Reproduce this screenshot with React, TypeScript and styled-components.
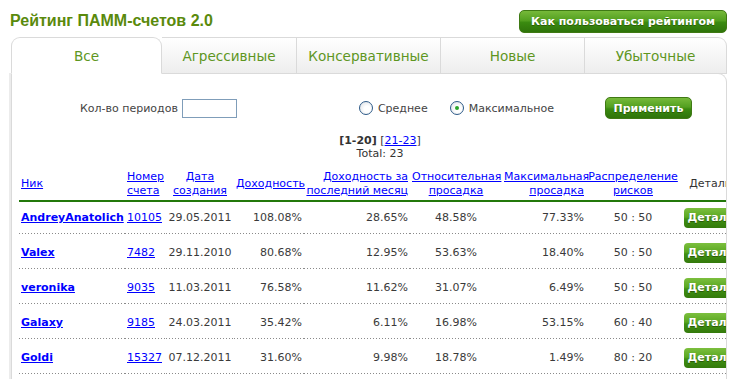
import React from "react";
import styled, { createGlobalStyle } from "styled-components";

const GlobalStyle = createGlobalStyle`
    body {
        margin: 0;
        background: #ffffff;
        font-family: "DejaVu Sans", Verdana, sans-serif;
        font-size: 11px;
        color: #333333;
    }
`;

const Page = styled.div`
    width: 734px;
    height: 379px;
    overflow: hidden;
`;

const TopBar = styled.div`
    display: flex;
    justify-content: space-between;
    align-items: center;
    height: 22px;
    padding: 10px 7px 0 10px;
`;

const Title = styled.h1`
    margin: 0;
    font-family: "Liberation Sans", Arial, sans-serif;
    font-size: 16px;
    font-weight: bold;
    color: #5a8a0c;
`;

interface GreenButtonProps {
    width: string;
    height: string;
}
const GreenButton = styled.button<GreenButtonProps>`
    width: ${(props) => props.width};
    height: ${(props) => props.height};
    padding: 0;
    border: 1px solid #3f7a14;
    border-radius: 5px;
    background: linear-gradient(#76b93a 0%, #53a020 45%, #3a8a10 55%, #2f740a 100%);
    color: #ffffff;
    font-family: "DejaVu Sans", Verdana, sans-serif;
    font-size: 11px;
    font-weight: bold;
    text-shadow: 0 1px 0 #2b5c06;
    white-space: nowrap;
    overflow: hidden;
    cursor: pointer;
`;

const Tabs = styled.div`
    display: flex;
    position: relative;
    z-index: 1;
    margin: 5px 0 -1px 11px;
    width: 716px;
`;

interface TabProps {
    active?: boolean;
    width: string;
    last?: boolean;
}
const Tab = styled.div<TabProps>`
    box-sizing: border-box;
    width: ${(props) => props.width};
    height: 37px;
    display: flex;
    justify-content: center;
    align-items: center;
    font-size: 13.6px;
    color: #5e961f;
    cursor: pointer;
    border-top: 1px solid #dadada;
    border-right: 1px solid #dadada;
    border-left: ${(props) => (props.active ? "1px solid #dadada" : "none")};
    border-bottom: 1px solid ${(props) => (props.active ? "#ffffff" : "#dadada")};
    border-radius: ${(props) =>
        props.active ? "9px 9px 0 0" : props.last ? "0 9px 0 0" : "0"};
    background: ${(props) =>
        props.active ? "#ffffff" : "linear-gradient(#ffffff, #ededed)"};
`;

const Panel = styled.div`
    margin-left: 11px;
    width: 716px;
    height: 306px;
    box-sizing: border-box;
    border: 1px solid #dadada;
    border-bottom: none;
    border-top-right-radius: 9px;
    box-shadow: -2px 0 0 #ececec;
    padding-left: 7px;
    overflow: hidden;
`;

const Content = styled.div`
    width: 722px;
`;

const FormRow = styled.div`
    display: flex;
    align-items: center;
    height: 22px;
    margin-top: 23px;
    padding-left: 61px;
    color: #444444;
`;

const Label = styled.span`
    margin-right: 4px;
`;

const PeriodInput = styled.input`
    box-sizing: border-box;
    width: 55px;
    height: 19px;
    border: 1px solid #7f9db9;
    padding: 0 2px;
    font-size: 11px;
`;

interface RadioItemProps {
    offset: string;
}
const RadioItem = styled.label<RadioItemProps>`
    display: flex;
    align-items: center;
    gap: 5px;
    margin-left: ${(props) => props.offset};
    cursor: pointer;
`;

interface RadioCircleProps {
    checked?: boolean;
}
const RadioCircle = styled.span<RadioCircleProps>`
    position: relative;
    width: 12px;
    height: 12px;
    border: 1px solid #2d5a88;
    border-radius: 50%;
    background: radial-gradient(circle at 60% 60%, #ffffff 30%, #d8dde2 100%);
    &::after {
        content: "";
        display: ${(props) => (props.checked ? "block" : "none")};
        position: absolute;
        left: 4px;
        top: 4px;
        width: 4px;
        height: 4px;
        border-radius: 50%;
        background: #2aa52a;
    }
`;

const ApplyWrap = styled.div`
    margin-left: 51px;
    display: flex;
`;

const Pager = styled.div`
    margin-top: 15px;
    text-align: center;
    line-height: 13px;
    color: #333333;
`;

const Current = styled.b`
    color: #333333;
`;

const Link = styled.a`
    color: #0000ff;
    text-decoration: underline;
    cursor: pointer;
`;

const NickLink = styled(Link)`
    font-weight: bold;
`;

const Table = styled.table`
    margin-top: 8px;
    width: 722px;
    table-layout: fixed;
    border-collapse: collapse;
`;

type Align = "left" | "center" | "right";

interface CellProps {
    align: Align;
}
const Th = styled.th<CellProps>`
    padding: 2px;
    height: 28px;
    line-height: 14px;
    font-weight: normal;
    text-align: ${(props) => props.align};
    vertical-align: middle;
    white-space: nowrap;
    border-bottom: 2px solid #23780a;
    color: #333333;
`;

const Row = styled.tr`
    & + & > td {
        padding-top: 5px;
    }
`;

const Td = styled.td<CellProps>`
    padding: 2px 2px 3px;
    height: 27px;
    text-align: ${(props) => props.align};
    vertical-align: middle;
    white-space: nowrap;
    background-image: linear-gradient(to right, #8a8a8a 1px, transparent 1px);
    background-size: 3px 1px;
    background-repeat: repeat-x;
    background-position: left bottom;
    color: #3a3a3a;
`;

const DetailsButton = styled.button`
    width: 54px;
    height: 20px;
    padding: 0 0 0 4px;
    text-align: left;
    border: none;
    border-radius: 4px;
    background: linear-gradient(#7cbf3e 0%, #5aa822 45%, #3f8f12 55%, #347a0c 100%);
    color: #ffffff;
    font-family: "DejaVu Sans", Verdana, sans-serif;
    font-size: 11px;
    font-weight: bold;
    text-shadow: 0 1px 0 #2b5c06;
    cursor: pointer;
`;

const columns: { title: React.ReactNode; width: number; align: Align; link: boolean }[] = [
    { title: "Ник", width: 106, align: "left", link: true },
    { title: <>Номер<br />счета</>, width: 41, align: "left", link: true },
    { title: <>Дата<br />создания</>, width: 68, align: "center", link: true },
    { title: "Доходность", width: 70, align: "right", link: true },
    { title: <>Доходность за<br />последний месяц</>, width: 106, align: "right", link: true },
    { title: <>Относительная<br />просадка</>, width: 92, align: "center", link: true },
    { title: <>Максимальная<br />просадка</>, width: 84, align: "right", link: true },
    { title: <>Распределение<br />рисков</>, width: 94, align: "center", link: true },
    { title: "Детали", width: 61, align: "center", link: false },
];

const rows = [
    ["AndreyAnatolich", "10105", "29.05.2011", "108.08%", "28.65%", "48.58%", "77.33%", "50 : 50"],
    ["Valex", "7482", "29.11.2010", "80.68%", "12.95%", "53.63%", "18.40%", "50 : 50"],
    ["veronika", "9035", "11.03.2011", "76.58%", "11.62%", "31.07%", "6.49%", "50 : 50"],
    ["Galaxy", "9185", "24.03.2011", "35.42%", "6.11%", "16.98%", "53.15%", "60 : 40"],
    ["Goldi", "15327", "07.12.2011", "31.60%", "9.98%", "18.78%", "1.49%", "80 : 20"],
];

const tabs = [
    { name: "Все", width: "151px" },
    { name: "Агрессивные", width: "135px" },
    { name: "Консервативные", width: "144px" },
    { name: "Новые", width: "144px" },
    { name: "Убыточные", width: "142px" },
];

export default function App() {
    const [activeTab, setActiveTab] = React.useState(0);
    const [mode, setMode] = React.useState("max");

    return (
        <Page>
            <GlobalStyle />
            <TopBar>
                <Title>Рейтинг ПАММ-счетов 2.0</Title>
                <GreenButton width="208px" height="23px">
                    Как пользоваться рейтингом
                </GreenButton>
            </TopBar>
            <Tabs>
                {tabs.map((t, i) => (
                    <Tab
                        key={t.name}
                        width={t.width}
                        active={i === activeTab}
                        last={i === tabs.length - 1}
                        onClick={() => setActiveTab(i)}>
                        {t.name}
                    </Tab>
                ))}
            </Tabs>
            <Panel>
                <Content>
                    <FormRow>
                        <Label>Кол-во периодов</Label>
                        <PeriodInput />
                        <RadioItem offset="122px" onClick={() => setMode("avg")}>
                            <RadioCircle checked={mode === "avg"} />
                            Среднее
                        </RadioItem>
                        <RadioItem offset="22px" onClick={() => setMode("max")}>
                            <RadioCircle checked={mode === "max"} />
                            Максимальное
                        </RadioItem>
                        <ApplyWrap>
                            <GreenButton width="87px" height="22px">
                                Применить
                            </GreenButton>
                        </ApplyWrap>
                    </FormRow>
                    <Pager>
                        <Current>[1-20]</Current> [<Link>21-23</Link>]
                        <br />
                        Total: 23
                    </Pager>
                    <Table>
                        <colgroup>
                            {columns.map((c, i) => (
                                <col key={i} style={{ width: c.width }} />
                            ))}
                        </colgroup>
                        <thead>
                            <tr>
                                {columns.map((c, i) => (
                                    <Th key={i} align={c.align}>
                                        {c.link ? <Link>{c.title}</Link> : c.title}
                                    </Th>
                                ))}
                            </tr>
                        </thead>
                        <tbody>
                            {rows.map((r) => (
                                <Row key={r[1]}>
                                    <Td align="left">
                                        <NickLink>{r[0]}</NickLink>
                                    </Td>
                                    <Td align="left">
                                        <Link>{r[1]}</Link>
                                    </Td>
                                    <Td align="center">{r[2]}</Td>
                                    <Td align="right">{r[3]}</Td>
                                    <Td align="right">{r[4]}</Td>
                                    <Td align="center">{r[5]}</Td>
                                    <Td align="right">{r[6]}</Td>
                                    <Td align="center">{r[7]}</Td>
                                    <Td align="center">
                                        <DetailsButton>Детали</DetailsButton>
                                    </Td>
                                </Row>
                            ))}
                        </tbody>
                    </Table>
                </Content>
            </Panel>
        </Page>
    );
}
